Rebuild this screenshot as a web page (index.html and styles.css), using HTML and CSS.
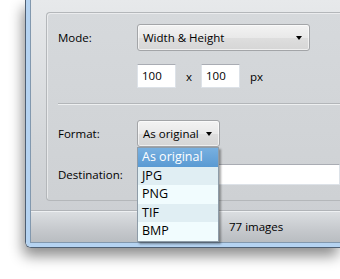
FILE: index.html
```html
<!DOCTYPE html>
<html lang="en">
  <head>
    <meta charset="UTF-8" />
    <title>Resize Images</title>
    <link rel="stylesheet" href="styles.css">
  </head>
  <body>
    <div class="window">
      <div class="frame">
        <div class="client">
          <div class="group">
            <div class="row row-mode">
              <span class="label">Mode:</span>
              <div class="combo combo-wide">
                <span>Width &amp; Height</span>
                <span class="arrow"></span>
              </div>
            </div>

            <div class="row row-size">
              <span class="label"></span>
              <div class="textbox textbox-small">100</div>
              <span class="unit times">x</span>
              <div class="textbox textbox-small">100</div>
              <span class="unit">px</span>
            </div>

            <div class="separator"></div>

            <div class="row row-format">
              <span class="label">Format:</span>
              <div class="combo combo-format">
                <span>As original</span>
                <span class="arrow"></span>
              </div>
            </div>

            <div class="row row-dest">
              <span class="label">Destination:</span>
              <div class="textbox textbox-wide"></div>
            </div>
          </div>

          <div class="statusbar">
            <span class="status-text">77 images</span>
          </div>

          <ul class="dropdown">
            <li class="selected">As original</li>
            <li>JPG</li>
            <li>PNG</li>
            <li>TIF</li>
            <li>BMP</li>
          </ul>
        </div>
      </div>
    </div>
  </body>
</html>
```

FILE: styles.css
```css
:root {
  --frame-outer: #4f5f72;
  --frame-blue: #b5d3f1;
  --frame-inner: #8298ae;
  --text: #000000;
  --input-border: #a9acb3;
}

* {
  margin: 0;
  padding: 0;
  box-sizing: border-box;
}

body {
  background: #ffffff;
  font-family: "Open Sans", "Noto Sans", sans-serif;
  font-size: 11.5px;
  color: var(--text);
  overflow: hidden;
  width: 340px;
  height: 279px;
}

.window {
  margin-left: 25px;
  width: 315px;
  border-left: 1px solid var(--frame-outer);
  border-bottom: 1px solid var(--frame-outer);
  border-bottom-left-radius: 6px;
  box-shadow: -2px 8px 14px rgba(0, 0, 0, 0.45);
}

.frame {
  border-left: 4px solid var(--frame-blue);
  border-bottom: 4px solid var(--frame-blue);
  border-bottom-left-radius: 5px;
}

.client {
  position: relative;
  height: 243px;
  border-left: 1px solid var(--frame-inner);
  border-bottom: 1px solid var(--frame-inner);
  background: linear-gradient(#e7e9eb, #d3d6d9 60%, #c9ccd0);
  display: flex;
  flex-direction: column;
}

.group {
  margin: 12px 0 0 15px;
  height: 189px;
  border: 1px solid #b4b7ba;
  border-right: none;
  border-radius: 4px 0 0 4px;
  background: linear-gradient(#d6d9dc, #ced1d4);
  box-shadow: inset 1px 1px 0 rgba(255, 255, 255, 0.5);
  padding-left: 11px;
}

.row {
  display: flex;
  align-items: center;
}

.label {
  width: 79px;
  flex-shrink: 0;
}

.row-mode {
  margin-top: 11px;
  height: 27px;
}

.row-size {
  margin-top: 13px;
  height: 24px;
}

.row-format {
  margin-top: 15px;
  height: 27px;
}

.row-dest {
  margin-top: 17px;
  height: 21px;
}

.combo {
  height: 27px;
  display: flex;
  align-items: center;
  justify-content: space-between;
  padding: 0 7px 0 5px;
  border: 1px solid #a3a5a8;
  border-radius: 3px;
  background: linear-gradient(#f3f3f3, #e9e9e9 50%, #dedede 51%, #d6d6d6);
  box-shadow: inset 0 0 0 1px rgba(255, 255, 255, 0.6);
}

.combo-wide {
  width: 173px;
}

.combo-format {
  width: 83px;
}

.arrow {
  width: 0;
  height: 0;
  border-left: 3.5px solid transparent;
  border-right: 3.5px solid transparent;
  border-top: 4px solid #000000;
}

.textbox {
  height: 24px;
  background: #ffffff;
  border: 1px solid #dde2e8;
  border-top-color: var(--input-border);
  padding: 3px 0 0 4px;
}

.textbox-small {
  width: 39px;
}

.textbox-wide {
  height: 21px;
  flex: 1;
}

.unit {
  margin: 0 10px 0 10px;
}

.times {
  margin: 0 9px 0 10px;
}

.separator {
  margin-top: 15px;
  height: 2px;
  border-top: 1px solid #b3b6b9;
  border-bottom: 1px solid #eef0f1;
}

.statusbar {
  margin-top: 9px;
  flex: 1;
  border-top: 1px solid #b1b4b8;
  background: linear-gradient(#dcdfe2, #c6c9cd 60%, #b9bdc1);
  box-shadow: inset 0 1px 0 #eef0f2;
  display: flex;
  align-items: center;
  padding-left: 198px;
}

.dropdown {
  position: absolute;
  left: 106px;
  top: 147px;
  width: 82px;
  list-style: none;
  background: #f1fcfe;
  border: 1px solid #8e9ca8;
  box-shadow: 2px 2px 2px rgba(0, 0, 0, 0.35);
  font-size: 12.5px;
}

.dropdown li {
  height: 18.6px;
  line-height: 18px;
  padding-left: 4px;
  color: #000000;
}

.dropdown li:nth-child(even) {
  background: #e0eef3;
}

.dropdown li.selected {
  background: linear-gradient(#78b0e0, #5a9ad3);
  color: #ffffff;
}
```
